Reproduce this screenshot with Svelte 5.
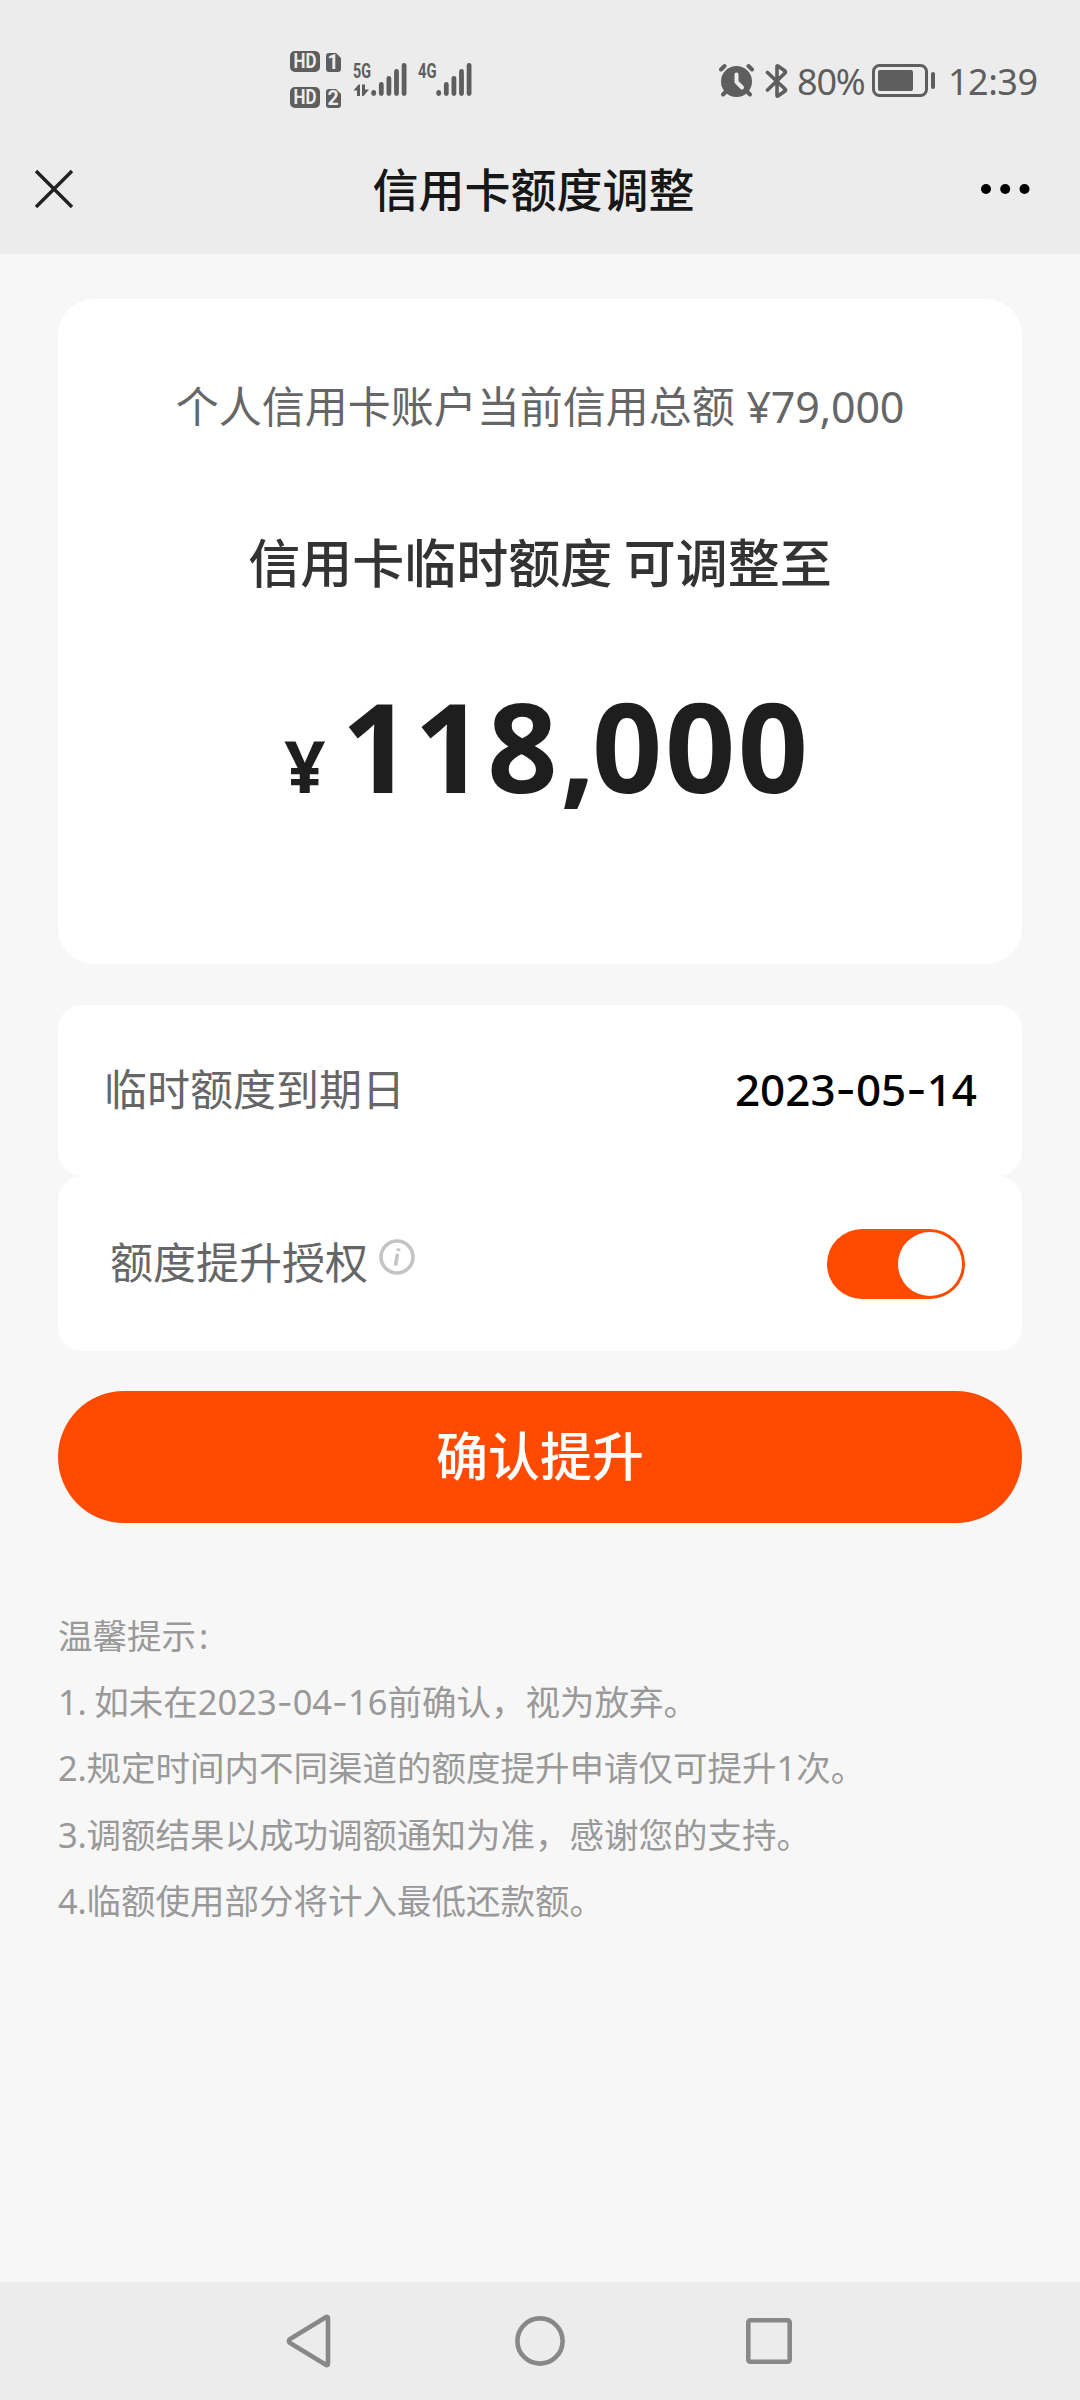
<script>
  let authorized = true;
  const toggle = () => {
    authorized = !authorized;
  }
  const bars = [6, 14, 20, 27, 33];
</script>

<div class="page">
  <header>
    <div class="status">
      <svg class="signals" width="190" height="60" viewBox="0 0 190 60">
        {#each [1, 2] as sim, i}
          <g transform="translate(0 {i * 36})">
            <rect x="0" y="1" width="30" height="21" rx="5" />
            <text class="hd" x="15" y="18" textLength="23" lengthAdjust="spacingAndGlyphs">HD</text>
            <path d="M39 3h7l5 5v11a3 3 0 0 1-3 3h-9a3 3 0 0 1-3-3V6a3 3 0 0 1 3-3z" />
            <text class="hd" x="43" y="19">{sim}</text>
          </g>
        {/each}
        <text class="net" x="63" y="28.3" textLength="18" lengthAdjust="spacingAndGlyphs">5G</text>
        <path d="M63.500 40.500l5-6h1.500V46h-3v-5.500z M72 34.500h3v5h4l-5.500 6.500H72z" />
        {#each bars as h, i}
          <rect x={81.3 + i * 7.6} y={46 - h} width="4.8" height={h} rx="2.4" />
        {/each}
        <text class="net" x="128" y="28.3" textLength="18.5" lengthAdjust="spacingAndGlyphs">4G</text>
        {#each bars as h, i}
          <rect x={146.3 + i * 7.6} y={46 - h} width="4.8" height={h} rx="2.4" />
        {/each}
      </svg>
      <div class="right">
        <svg class="alarm" width="36" height="36" viewBox="0 0 36 36">
          <circle cx="17.5" cy="18.5" r="15.5" />
          <path d="M2 6.500l3.500-3.500M33 6.500l-3.500-3.500" class="ear" />
          <path d="M7 28.500l-3 3M28 28.500l3 3" class="ear" />
          <path d="M17.500 11.500v7.500l5.500 5.500" class="hand" />
        </svg>
        <svg class="bt" width="24" height="36" viewBox="0 0 24 36">
          <path d="M2.500 9.500L20 26q1 1 0 2l-7 5q-1 .500-1-.500v-29q0-1 1-.500l7 5q1 1 0 2L2.500 27" />
        </svg>
        <span class="percent">80%</span>
        <svg class="battery" width="64" height="34" viewBox="0 0 64 34">
          <rect x="1.5" y="1.5" width="53" height="30" rx="6" class="case" />
          <rect x="6" y="6" width="35" height="21" rx="2" />
          <rect x="59" y="8" width="4" height="17" rx="2" />
        </svg>
        <span class="time">12:39</span>
      </div>
    </div>
    <div class="titlebar">
      <svg width="40" height="40" viewBox="0 0 40 40">
        <path d="M2 2l36 36M38 2L2 38" stroke="#222" stroke-width="3.4" />
      </svg>
      <h1>信用卡额度调整</h1>
      <svg width="50" height="12" viewBox="0 0 50 12">
        <circle cx="6" cy="6" r="5" /><circle cx="25.2" cy="6" r="5" /><circle cx="44.5" cy="6" r="5" />
      </svg>
    </div>
  </header>

  <main>
    <section class="limit">
      <p class="current">个人信用卡账户当前信用总额 <span>¥79,000</span></p>
      <h2>信用卡临时额度 可调整至</h2>
      <div class="amount"><span class="yen">¥</span><span class="num">118<i>,</i>000</span></div>
    </section>

    <section class="row">
      <span class="label">临时额度到期日</span>
      <span class="date">2023<i>-</i>05<i>-</i>14</span>
    </section>
    <section class="row auth">
      <span class="label">额度提升授权</span>
      <svg class="info" width="38" height="38" viewBox="0 0 38 38">
        <circle cx="19" cy="19" r="16" />
        <path d="M20.500 10.500v2.500M19.500 16l-2 11.500" />
      </svg>
      <button class="switch" class:on={authorized} aria-label="额度提升授权" on:click={toggle}><b></b></button>
    </section>

    <button class="confirm">确认提升</button>

    <div class="tips">
      <p>温馨提示<em class="colon">:</em></p>
      <p><em>1.</em> 如未在<em class="day">2023<i>-</i>04<i>-</i>16</em>前确认，视为放弃。</p>
      <p><em>2.</em>规定时间内不同渠道的额度提升申请仅可提升<em class="one">1</em>次。</p>
      <p><em>3.</em>调额结果以成功调额通知为准，感谢您的支持。</p>
      <p><em>4.</em>临额使用部分将计入最低还款额。</p>
    </div>
  </main>

  <nav>
    <svg width="50" height="56" viewBox="0 0 50 56">
      <path d="M42 5.500v45q0 2.500-2.200 1.200L4 30q-2.200-2 0-4L39.800 4.300q2.200-1.300 2.200 1.200z" />
    </svg>
    <svg width="56" height="56" viewBox="0 0 56 56">
      <circle cx="28" cy="28" r="22.6" />
    </svg>
    <svg width="50" height="56" viewBox="0 0 50 56">
      <rect x="4.3" y="7.3" width="41.4" height="41.4" rx="2" />
    </svg>
  </nav>
</div>

<style>
:global(body) {
  background: #f7f7f7;
}
.page {
  display: flex;
  flex-direction: column;
  width: 1080px;
  height: 2400px;
  background: #f7f7f7;
  font-family: "Noto Sans CJK SC", sans-serif;
}
h1, h2, p {
  margin: 0;
}
svg {
  display: block;
  flex-shrink: 0;
}
i, em {
  font-style: normal;
}
button {
  border: 0;
  font-family: inherit;
  cursor: pointer;
}

header {
  height: 254px;
  background: #ececec;
}
.status {
  display: flex;
  justify-content: space-between;
  box-sizing: border-box;
  height: 124px;
  padding: 50px 42px 0 290px;
  fill: #5e5e5e;
  color: #5e5e5e;
}
.hd {
  fill: #ececec;
  font: bold 19.5px "Roboto", sans-serif;
  text-anchor: middle;
}
.net {
  font: bold 21px "Roboto", sans-serif;
}
.right {
  display: flex;
  align-items: center;
  height: 61px;
  font: 400 36px "Noto Sans", sans-serif;
}
.ear {
  fill: none;
  stroke: #5e5e5e;
  stroke-width: 4;
  stroke-linecap: round;
}
.hand {
  fill: none;
  stroke: #ececec;
  stroke-width: 4;
  stroke-linecap: round;
}
.bt {
  margin-left: 10px;
}
.bt path {
  fill: none;
  stroke: #5e5e5e;
  stroke-width: 3.6;
  stroke-linecap: round;
}
.percent {
  width: 66px;
  margin: 2px 9px 0 8px;
  letter-spacing: -1.2px;
}
.case {
  fill: none;
  stroke: #5e5e5e;
  stroke-width: 3;
}
.time {
  width: 90px;
  margin: 2px 0 0 12px;
  letter-spacing: -0.5px;
}
.titlebar {
  display: flex;
  align-items: center;
  justify-content: space-between;
  height: 130px;
  padding: 0 50px 0 34px;
}
h1 {
  padding: 0 0 5px 13px;
  color: #171717;
  font-size: 46px;
  font-weight: 500;
}

main {
  flex: 1;
  padding: 45px 58px 0;
}
.limit {
  box-sizing: border-box;
  height: 665px;
  padding-top: 73px;
  border-radius: 36px;
  background: #fff;
  text-align: center;
}
.current {
  color: #666;
  font-size: 43px;
  line-height: 64px;
}
.current span {
  margin-left: 2px;
  font-family: "Noto Sans", sans-serif;
  letter-spacing: -0.2px;
}
h2 {
  margin-top: 82px;
  color: #333;
  font-size: 52px;
  font-weight: 500;
  line-height: 80px;
}
.amount {
  display: flex;
  align-items: baseline;
  justify-content: center;
  margin-top: 65px;
  padding-left: 15px;
  color: #1e1e1e;
  font-family: "Noto Sans", sans-serif;
  font-weight: bold;
  line-height: 160px;
}
.yen {
  margin-right: 16px;
  font-size: 72px;
}
.num {
  font-size: 123px;
  letter-spacing: 2.6px;
}
.num i {
  letter-spacing: -3.4px;
}
.row {
  display: flex;
  align-items: center;
  justify-content: space-between;
  box-sizing: border-box;
  height: 171px;
  margin-top: 41px;
  padding: 0 45px 0 46px;
  border-radius: 24px;
  background: #fff;
  color: #666;
  font-size: 43px;
}
.label {
  padding-bottom: 7px;
}
.date {
  padding-bottom: 3px;
  color: #000;
  font-family: "Noto Sans", sans-serif;
  font-size: 44px;
  font-weight: 500;
}
.date i, .day i {
  font-family: "Inter", sans-serif;
}
.auth {
  justify-content: flex-start;
  height: 175px;
  margin-top: 0;
  padding: 0 57px 0 52px;
}
.info {
  margin: -13px 0 0 10px;
}
.info circle {
  fill: none;
  stroke: #c4c4c4;
  stroke-width: 3.6;
}
.info path {
  stroke: #c4c4c4;
  stroke-width: 3.6;
}
.switch {
  display: flex;
  box-sizing: border-box;
  width: 138px;
  height: 70px;
  margin-left: auto;
  padding: 3px;
  border-radius: 35px;
  background: #ccc;
}
.switch.on {
  justify-content: flex-end;
  background: #ff4a00;
}
.switch b {
  width: 64px;
  height: 64px;
  border-radius: 50%;
  background: #fff;
}
.confirm {
  display: block;
  width: 100%;
  height: 132px;
  margin-top: 40px;
  padding: 0 0 8px;
  border-radius: 66px;
  background: #ff4a00;
  color: #fff;
  font-size: 52px;
  font-weight: 500;
}
.tips {
  margin-top: 78px;
  color: #999;
  font-size: 34.5px;
  line-height: 66.2px;
}
.tips p {
  height: 66.2px;
  white-space: nowrap;
}
.tips em {
  font-family: "Noto Sans", sans-serif;
  letter-spacing: -0.2px;
}
.tips .day, .tips .one {
  letter-spacing: 0;
}
.tips .colon {
  padding-left: 3px;
}

nav {
  display: flex;
  align-items: center;
  justify-content: space-between;
  height: 118px;
  padding: 0 286px 0 286px;
  background: #ececec;
}
nav svg {
  fill: none;
  stroke: #888;
  stroke-width: 4.6;
}
</style>
